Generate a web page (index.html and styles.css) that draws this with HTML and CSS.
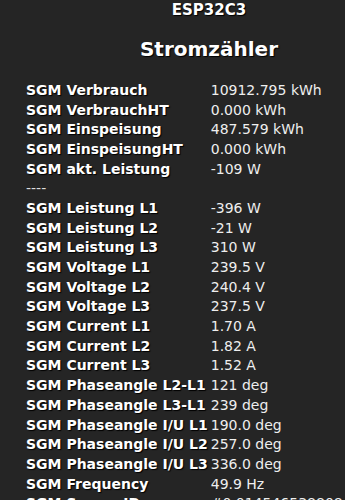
FILE: index.html
```html
<!DOCTYPE html>
<html lang="de">
<head>
<meta charset="utf-8">
<link rel="stylesheet" href="styles.css">
</head>
<body>
<div class="page">
  <h2 class="device">ESP32C3</h2>
  <h1 class="title">Stromzähler</h1>
  <table class="data">
    <tr><th>SGM Verbrauch</th><td>10912.795 kWh</td></tr>
    <tr><th>SGM VerbrauchHT</th><td>0.000 kWh</td></tr>
    <tr><th>SGM Einspeisung</th><td>487.579 kWh</td></tr>
    <tr><th>SGM EinspeisungHT</th><td>0.000 kWh</td></tr>
    <tr><th>SGM akt. Leistung</th><td>-109 W</td></tr>
    <tr><td class="sep">----</td><td></td></tr>
    <tr><th>SGM Leistung L1</th><td>-396 W</td></tr>
    <tr><th>SGM Leistung L2</th><td>-21 W</td></tr>
    <tr><th>SGM Leistung L3</th><td>310 W</td></tr>
    <tr><th>SGM Voltage L1</th><td>239.5 V</td></tr>
    <tr><th>SGM Voltage L2</th><td>240.4 V</td></tr>
    <tr><th>SGM Voltage L3</th><td>237.5 V</td></tr>
    <tr><th>SGM Current L1</th><td>1.70 A</td></tr>
    <tr><th>SGM Current L2</th><td>1.82 A</td></tr>
    <tr><th>SGM Current L3</th><td>1.52 A</td></tr>
    <tr><th>SGM Phaseangle L2-L1</th><td>121 deg</td></tr>
    <tr><th>SGM Phaseangle L3-L1</th><td>239 deg</td></tr>
    <tr><th>SGM Phaseangle I/U L1</th><td>190.0 deg</td></tr>
    <tr><th>SGM Phaseangle I/U L2</th><td>257.0 deg</td></tr>
    <tr><th>SGM Phaseangle I/U L3</th><td>336.0 deg</td></tr>
    <tr><th>SGM Frequency</th><td>49.9 Hz</td></tr>
    <tr><th>SGM Server ID</th><td>#0.014546538808</td></tr>
  </table>
</div>
</body>
</html>
```
FILE: styles.css
```css
html, body {
  margin: 0;
  padding: 0;
  background: #252525;
  overflow: hidden;
}
body {
  font-family: "DejaVu Sans", Verdana, sans-serif;
  color: #eeeeee;
}
.page {
  padding: 0 0 0 26px;
}
.device {
  margin: 0;
  padding-top: 1px;
  font-size: 15px;
  font-weight: bold;
  text-align: center;
  padding-left: 47px;
  color: #ffffff;
  text-shadow: 1px 1px 1px #000;
  line-height: 18px;
}
.title {
  margin: 18px 0 0 0;
  font-size: 20px;
  font-weight: bold;
  text-align: center;
  padding-left: 47px;
  color: #ffffff;
  text-shadow: 1px 1px 1px #000;
  line-height: 25px;
}
.data {
  margin-top: 18px;
  border-collapse: collapse;
  font-size: 14px;
}
.data th {
  text-align: left;
  font-weight: bold;
  color: #ffffff;
  text-shadow: 1px 1px 1px #000;
  padding: 0 3px 0 0;
  height: 19.7px;
  white-space: nowrap;
}
.data td {
  color: #eeeeee;
  padding: 0;
  height: 19.7px;
  white-space: nowrap;
}
.data .sep {
  color: #dddddd;
  line-height: 14px;
}
```
